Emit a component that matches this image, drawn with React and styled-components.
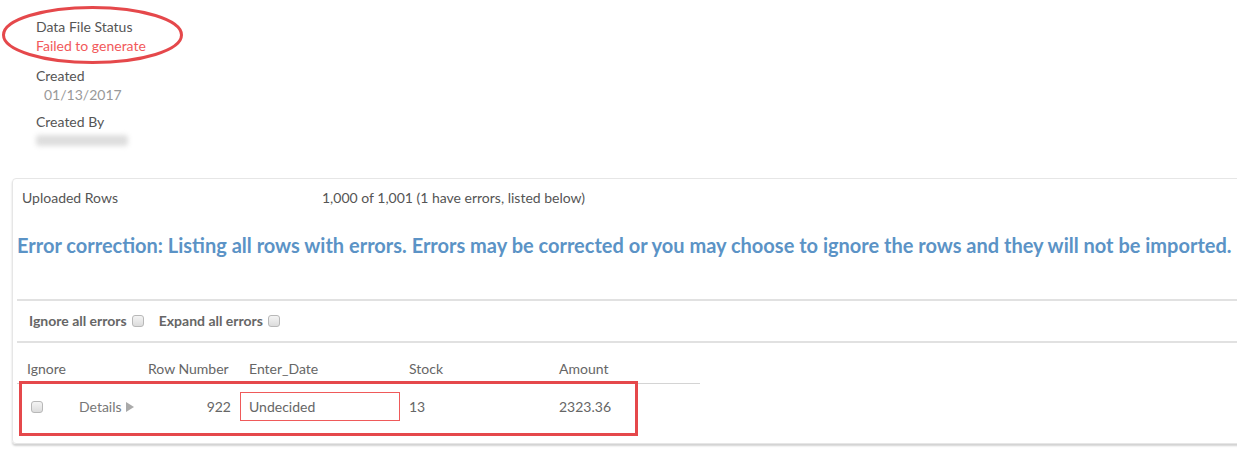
import React from 'react';
import styled, { createGlobalStyle } from 'styled-components';

const GlobalStyle = createGlobalStyle`
  html, body {
    margin: 0;
    padding: 0;
    background: #fff;
    overflow: hidden;
  }
  body {
    font-family: Lato, "Open Sans", sans-serif;
    font-size: 14px;
    color: #555;
  }
`;

const Page = styled.div`
  position: relative;
  width: 1237px;
  height: 467px;
  overflow: hidden;
`;

const Summary = styled.div`
  padding: 17px 0 0 36px;
  height: 178px;
  box-sizing: border-box;
`;

const Field = styled.div`
  margin-bottom: ${({ gap }) => gap || 11}px;
`;

const Label = styled.div`
  line-height: 19px;
  color: #555;
`;

const Value = styled.div`
  line-height: 19px;
  color: ${({ tone }) => (tone === 'error' ? '#f2595b' : '#999')};
  padding-left: ${({ indent }) => indent || 0}px;
`;

const Blurred = styled.div`
  margin-top: 4px;
  width: 92px;
  height: 11px;
  background: #dedede;
  filter: blur(2.5px);
  border-radius: 3px;
`;

const Card = styled.div`
  margin-left: 12px;
  width: 1250px;
  border: 1px solid #e6e6e6;
  border-radius: 4px;
  box-shadow: 0 2px 2px rgba(0, 0, 0, 0.18);
  padding: 0 0 13px 4px;
  box-sizing: border-box;
`;

const InfoRow = styled.div`
  display: grid;
  grid-template-columns: 300px auto;
  padding: 9px 0 0 5px;
  line-height: 19px;
`;

const Heading = styled.h2`
  margin: 26px 0 0 0;
  font-size: 20px;
  font-weight: 700;
  color: #5b93c6;
  line-height: 24px;
  white-space: nowrap;
`;

const Toolbar = styled.div`
  margin-top: 42px;
  border-top: 2px solid #e1e1e1;
  border-bottom: 2px solid #e1e1e1;
  height: 40px;
  display: flex;
  align-items: center;
  gap: 15px;
  padding-left: 12px;
`;

const ToolItem = styled.label`
  display: flex;
  align-items: center;
  gap: 5px;
  font-weight: 700;
  color: #666;
  padding-bottom: 1px;
`;

const Check = styled.input.attrs({ type: 'checkbox' })`
  appearance: none;
  margin: 0;
  width: 12px;
  height: 12px;
  border: 1px solid #b8b8b8;
  border-radius: 3px;
  background: linear-gradient(#f4f4f4, #dcdcdc);
`;

const Table = styled.div`
  margin-top: 13px;
  width: 683px;
  display: grid;
  grid-template-columns: 52px 70px 101px 160px 150px 150px;
`;

const HeadCell = styled.div`
  line-height: 19px;
  padding: 3px 0 5px ${({ pad }) => (pad === undefined ? 9 : pad)}px;
  border-bottom: 1px solid #d4d4d4;
  color: #666;
  grid-column: span ${({ span }) => span || 1};
`;

const Cell = styled.div`
  display: flex;
  align-items: center;
  height: 45px;
  padding: 0 ${({ right }) => right || 0}px 1px ${({ pad }) => (pad === undefined ? 9 : pad)}px;
  justify-content: ${({ align }) => (align === 'right' ? 'flex-end' : 'flex-start')};
  color: #666;
`;

const DetailsLink = styled.span`
  display: inline-flex;
  align-items: center;
  gap: 4px;
  color: #777;
`;

const Arrow = styled.span`
  width: 0;
  height: 0;
  border-top: 5px solid transparent;
  border-bottom: 5px solid transparent;
  border-left: 8px solid #aaa;
`;

const ErrorInput = styled.div`
  box-sizing: border-box;
  width: 160px;
  height: 29px;
  border: 1px solid #ef5a5a;
  padding-left: 8px;
  display: flex;
  align-items: center;
  color: #666;
`;

const Ellipse = styled.svg`
  position: absolute;
  left: 0;
  top: 0;
`;

const Box = styled.div`
  position: absolute;
  left: 19px;
  top: 381px;
  width: 619px;
  height: 55px;
  border: 3px solid #e5484b;
  box-sizing: border-box;
`;

export default function App() {
  return (
    <Page>
      <GlobalStyle />
      <Summary>
        <Field>
          <Label>Data File Status</Label>
          <Value tone="error">Failed to generate</Value>
        </Field>
        <Field gap={8}>
          <Label>Created</Label>
          <Value indent={8}>01/13/2017</Value>
        </Field>
        <Field>
          <Label>Created By</Label>
          <Blurred />
        </Field>
      </Summary>

      <Card>
        <InfoRow>
          <span>Uploaded Rows</span>
          <span>1,000 of 1,001 (1 have errors, listed below)</span>
        </InfoRow>
        <Heading>
          Error correction: Listing all rows with errors. Errors may be corrected or you may choose to ignore the rows and they will not be imported.
        </Heading>
        <Toolbar>
          <ToolItem>
            Ignore all errors <Check />
          </ToolItem>
          <ToolItem>
            Expand all errors <Check />
          </ToolItem>
        </Toolbar>
        <Table>
          <HeadCell span={2} pad={10}>Ignore</HeadCell>
          <HeadCell pad={9}>Row Number</HeadCell>
          <HeadCell>Enter_Date</HeadCell>
          <HeadCell>Stock</HeadCell>
          <HeadCell>Amount</HeadCell>

          <Cell pad={14}>
            <Check />
          </Cell>
          <Cell pad={10}>
            <DetailsLink>
              Details <Arrow />
            </DetailsLink>
          </Cell>
          <Cell align="right" right={9}>922</Cell>
          <Cell pad={0}>
            <ErrorInput>Undecided</ErrorInput>
          </Cell>
          <Cell>13</Cell>
          <Cell>2323.36</Cell>
        </Table>
      </Card>

      <Ellipse width="190" height="70" viewBox="0 0 190 70">
        <ellipse cx="92.5" cy="35" rx="89" ry="27.5" fill="none" stroke="#e5484b" strokeWidth="3" />
      </Ellipse>
      <Box />
    </Page>
  );
}
